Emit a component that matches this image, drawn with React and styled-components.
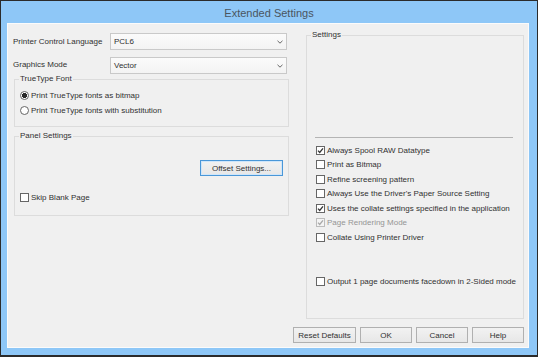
import React from "react";
import styled, { createGlobalStyle } from "styled-components";

const GlobalStyle = createGlobalStyle`
  html, body { margin: 0; padding: 0; background: #ffffff; }
  body { font-family: "Liberation Sans", Arial, sans-serif; }
  *, *::before, *::after { box-sizing: border-box; }
`;

const Window = styled.div`
  width: 538px;
  height: 357px;
  border: 1px solid #2b2b2b;
  border-bottom-width: 2px;
  background: #8ec7f7;
  display: flex;
  flex-direction: column;
`;

const TitleBar = styled.div`
  height: 22px;
  display: flex;
  align-items: center;
  justify-content: center;
  font-size: 11px;
  color: #4a5560;
  padding-top: 1px;
`;

const Client = styled.div`
  margin: 0 8px 7px 6px;
  flex: 1;
  background: #f0f0f0;
  border: 1px solid #fbfbfb;
  padding: 6px 4px 4px 5px;
  display: flex;
  flex-direction: column;
  font-size: 8px;
  color: #303030;
`;

const Main = styled.div`
  display: grid;
  grid-template-columns: 276px 218px;
  column-gap: 17px;
  align-items: start;
`;

const LeftColumn = styled.div`
  display: flex;
  flex-direction: column;
  padding-top: 3px;
`;

const SelectRow = styled.div`
  display: grid;
  grid-template-columns: 97px 177px;
  height: 17px;
  align-items: center;
  margin-top: ${(p) => p.$mt || 0}px;
`;

const Label = styled.span`
  white-space: nowrap;
  margin-top: ${(p) => p.$dy || 0}px;
`;

const Select = styled.div`
  height: 100%;
  border: 1px solid #c9c9c9;
  background: linear-gradient(#fbfbfb, #f3f3f3);
  display: flex;
  align-items: center;
  justify-content: space-between;
  padding: 0 3px 0 3px;
`;

const GroupBox = styled.fieldset`
  margin: ${(p) => p.$mt || 0}px 0 0 ${(p) => p.$ml || 0}px;
  padding: 0;
  border: 1px solid #dcdcdc;
  min-width: 0;
`;

const Legend = styled.legend`
  padding: 0 1px;
  margin-left: 4px;
  font-size: 8px;
  line-height: 10px;
  color: #303030;
`;

const GroupBody = styled.div`
  display: flex;
  flex-direction: column;
  padding: ${(p) => p.$pad};
`;

const Row = styled.div`
  display: flex;
  align-items: center;
  gap: 2px;
  height: ${(p) => p.$h || 14}px;
  margin-top: ${(p) => p.$mt || 0}px;
  white-space: nowrap;
  color: ${(p) => (p.$disabled ? "#959595" : "#303030")};
`;

const Box = styled.span`
  width: 9px;
  height: 9px;
  flex: none;
  border: 1px solid ${(p) => (p.$disabled ? "#bcbcbc" : "#666666")};
  background: ${(p) => (p.$disabled ? "#f4f4f4" : "#ffffff")};
  display: flex;
  align-items: center;
  justify-content: center;
`;

const RadioDot = styled.span`
  width: 9px;
  height: 9px;
  flex: none;
  border-radius: 50%;
  border: 1px solid #666666;
  background: ${(p) =>
    p.$checked
      ? "radial-gradient(circle, #2a2a2a 0 2.3px, #ffffff 2.8px)"
      : "#ffffff"};
`;

const Separator = styled.div`
  height: 1px;
  background: #b4b4b4;
  margin: 97px 10px 0 8px;
`;

const ButtonBase = styled.button`
  font-family: inherit;
  font-size: 8px;
  color: #303030;
  height: 16px;
  width: ${(p) => p.$w}px;
  padding: 0;
  border: 1px solid ${(p) => (p.$default ? "#4a97d8" : "#b0b0b0")};
  box-shadow: ${(p) => (p.$default ? "inset 0 0 0 1px #cfe6fa" : "none")};
  background: linear-gradient(#f2f2f2, #e7e7e7);
`;

const OffsetRow = styled.div`
  display: flex;
  justify-content: flex-end;
`;

const ButtonRow = styled.div`
  display: flex;
  justify-content: flex-end;
  gap: 4px;
  margin-top: 8px;
`;

function Chevron() {
  return (
    <svg width="6" height="4" viewBox="0 0 6 4">
      <path d="M0.5 0.8 L3 3.2 L5.5 0.8" fill="none" stroke="#666" strokeWidth="1" />
    </svg>
  );
}

function CheckMark({ disabled }) {
  return (
    <svg width="7" height="7" viewBox="0 0 7 7">
      <path
        d="M1 3.6 L2.7 5.4 L6 1.3"
        fill="none"
        stroke={disabled ? "#a8a8a8" : "#333333"}
        strokeWidth="1.3"
      />
    </svg>
  );
}

function Check({ label, checked, disabled, h, mt }) {
  return (
    <Row $h={h} $mt={mt} $disabled={disabled}>
      <Box $disabled={disabled}>{checked && <CheckMark disabled={disabled} />}</Box>
      <span>{label}</span>
    </Row>
  );
}

function Radio({ label, checked }) {
  return (
    <Row $h={15}>
      <RadioDot $checked={checked} />
      <span>{label}</span>
    </Row>
  );
}

const settings = [
  { label: "Always Spool RAW Datatype", checked: true },
  { label: "Print as Bitmap" },
  { label: "Refine screening pattern" },
  { label: "Always Use the Driver's Paper Source Setting" },
  { label: "Uses the collate settings specified in the application", checked: true },
  { label: "Page Rendering Mode", checked: true, disabled: true },
  { label: "Collate Using Printer Driver" },
];

export default function App() {
  return (
    <>
      <GlobalStyle />
      <Window>
        <TitleBar>Extended Settings</TitleBar>
        <Client>
          <Main>
            <LeftColumn>
              <SelectRow>
                <Label>Printer Control Language</Label>
                <Select>
                  <span>PCL6</span>
                  <Chevron />
                </Select>
              </SelectRow>
              <SelectRow $mt={7}>
                <Label $dy={-2}>Graphics Mode</Label>
                <Select>
                  <span>Vector</span>
                  <Chevron />
                </Select>
              </SelectRow>
              <GroupBox $ml={1}>
                <Legend>TrueType Font</Legend>
                <GroupBody $pad="4px 0 8px 5px">
                  <Radio label="Print TrueType fonts as bitmap" checked />
                  <Radio label="Print TrueType fonts with substitution" />
                </GroupBody>
              </GroupBox>
              <GroupBox $ml={1} $mt={4}>
                <Legend>Panel Settings</Legend>
                <GroupBody $pad="19px 5px 11px 5px">
                  <OffsetRow>
                    <ButtonBase $w={83} $default>
                      Offset Settings...
                    </ButtonBase>
                  </OffsetRow>
                  <Check label="Skip Blank Page" mt={14} />
                </GroupBody>
              </GroupBox>
            </LeftColumn>
            <GroupBox>
              <Legend>Settings</Legend>
              <GroupBody $pad="0 0 30px 0">
                <Separator />
                <GroupBody $pad="5px 0 0 9px">
                  {settings.map((s) => (
                    <Check key={s.label} {...s} h={14.5} />
                  ))}
                  <Check label="Output 1 page documents facedown in 2-Sided mode" mt={29.5} />
                </GroupBody>
              </GroupBody>
            </GroupBox>
          </Main>
          <ButtonRow>
            <ButtonBase $w={63}>Reset Defaults</ButtonBase>
            <ButtonBase $w={52}>OK</ButtonBase>
            <ButtonBase $w={52}>Cancel</ButtonBase>
            <ButtonBase $w={52}>Help</ButtonBase>
          </ButtonRow>
        </Client>
      </Window>
    </>
  );
}
